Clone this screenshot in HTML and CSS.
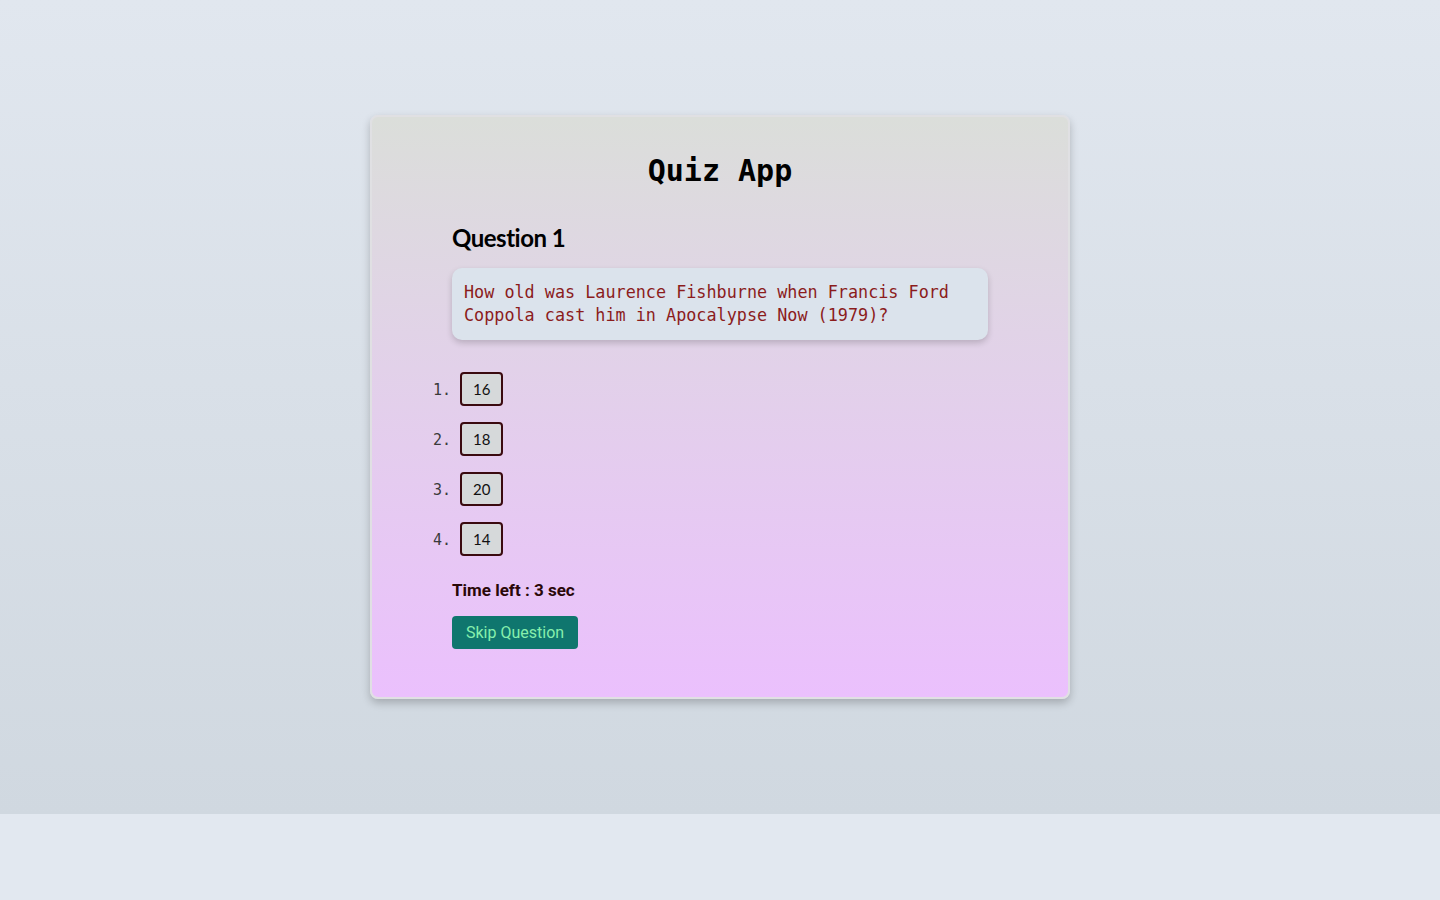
FILE: index.html
```html
<!DOCTYPE html>
<html lang="en">
<head>
<meta charset="utf-8">
<title>Quiz App</title>
<link rel="stylesheet" href="styles.css">
</head>
<body>
<div class="page">
  <div class="card">
    <h1 class="title">Quiz App</h1>
    <h2 class="qnum">Question 1</h2>
    <div class="qbox">How old was Laurence Fishburne when Francis Ford Coppola cast him in Apocalypse Now (1979)?</div>
    <ol class="options">
      <li><button class="opt">16</button></li>
      <li><button class="opt">18</button></li>
      <li><button class="opt">20</button></li>
      <li><button class="opt">14</button></li>
    </ol>
    <p class="timer">Time left : 3 sec</p>
    <button class="skip">Skip Question</button>
  </div>
</div>
</body>
</html>
```
FILE: styles.css
```css
html, body {
  margin: 0;
  padding: 0;
  background: #e2e8f0;
}
body {
  font-family: "Roboto", "Liberation Sans", sans-serif;
}
.page {
  height: 814px;
  background: linear-gradient(to bottom, #e1e7ef, #d0d8e0);
  display: flex;
  justify-content: center;
  padding-top: 115px;
  box-sizing: border-box;
}
.card {
  width: 700px;
  height: 584px;
  box-sizing: border-box;
  border: 2px solid #e0e0e3;
  border-radius: 8px;
  background: linear-gradient(to bottom, #dbdeda, #ebc0fd);
  box-shadow: 0 4px 8px rgba(0, 0, 0, 0.22);
  padding: 34px 80px 0 80px;
}
.title {
  margin: 0;
  text-align: center;
  font-family: "DejaVu Sans Mono", monospace;
  font-weight: bold;
  font-size: 30px;
  line-height: 40px;
  color: #000;
}
.qnum {
  margin: 32px 0 0 0;
  font-family: "Lato", "Inter", sans-serif;
  font-weight: 700;
  font-size: 24px;
  line-height: 30px;
  color: #000;
  letter-spacing: -0.5px;
}
.qbox {
  margin-top: 15px;
  background: #dbe3ec;
  border-radius: 10px;
  box-shadow: 0 3px 6px rgba(0, 0, 0, 0.18);
  padding: 13px 12px;
  font-family: "DejaVu Sans Mono", monospace;
  font-size: 16.8px;
  line-height: 23px;
  color: #8b1c1c;
}
.options {
  margin: 32px 0 0 0;
  padding: 0 0 0 8px;
  font-family: "DejaVu Sans Mono", monospace;
  font-size: 15px;
  color: #333;
}
.options li {
  height: 34px;
  margin-bottom: 16px;
  padding-left: 0;
}
.options li::marker {
  color: #3a3a3a;
}
.opt {
  height: 34px;
  min-width: 43px;
  box-sizing: border-box;
  padding: 0 11px;
  border: 2px solid #3a0a0f;
  border-radius: 4px;
  background: #d6d9da;
  font-family: "Lato", "Inter", sans-serif;
  font-size: 15px;
  color: #111;
}
.timer {
  margin: 22px 0 0 0;
  font-weight: 700;
  font-size: 17px;
  line-height: 24px;
  color: #2a0808;
}
.skip {
  margin-top: 14px;
  height: 33px;
  padding: 0 14px;
  border: none;
  border-radius: 4px;
  background: #0f766e;
  color: #86efac;
  font-family: "Roboto", sans-serif;
  font-size: 16px;
}
```
